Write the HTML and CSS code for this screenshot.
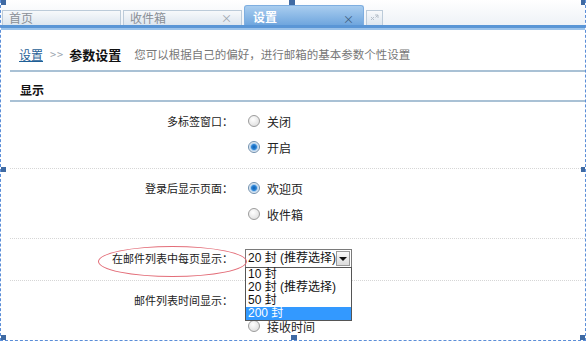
FILE: index.html
```html
<!DOCTYPE html>
<html lang="zh-CN">
<head>
    <meta charset="UTF-8">
    <title>参数设置</title>
    <link rel="stylesheet" href="styles.css">
</head>
<body>
    <div class="frame">
        <div class="tabbar">
            <div class="tab">首页</div>
            <div class="tab">收件箱<span class="tab-close">×</span></div>
            <div class="tab active">设置<span class="tab-close">×</span></div>
            <div class="tab tab-mini">
                <svg width="9" height="9" viewBox="0 0 9 9">
                    <path d="M1 3 L4 6 M4 3 L1 6" stroke="#b5bfc9" stroke-width="1" fill="none"/>
                    <path d="M5 1 H8 V4 M8 1 L5.5 3.5" stroke="#b5bfc9" stroke-width="1" fill="none"/>
                </svg>
            </div>
        </div>

        <div class="page">
            <div class="crumbs">
                <a href="#" class="crumb-link">设置</a>
                <span class="crumb-sep">&gt;&gt;</span>
                <strong class="crumb-title">参数设置</strong>
                <span class="crumb-desc">您可以根据自己的偏好，进行邮箱的基本参数个性设置</span>
            </div>

            <div class="section-title">显示</div>

            <div class="row">
                <div class="row-label">多标签窗口：</div>
                <div class="row-options">
                    <div class="opt"><span class="radio"></span>关闭</div>
                    <div class="opt"><span class="radio checked"></span>开启</div>
                </div>
            </div>

            <div class="row row-tall">
                <div class="row-label">登录后显示页面：</div>
                <div class="row-options">
                    <div class="opt"><span class="radio checked"></span>欢迎页</div>
                    <div class="opt"><span class="radio"></span>收件箱</div>
                </div>
            </div>

            <div class="row row-mid">
                <div class="row-label">在邮件列表中每页显示：</div>
                <div class="row-options">
                    <div class="opt select-opt">
                        <div class="select">
                            <span class="select-value">20 封 (推荐选择)</span>
                            <span class="select-btn"></span>
                            <ul class="select-list">
                                <li>10 封</li>
                                <li>20 封 (推荐选择)</li>
                                <li>50 封</li>
                                <li class="hover">200 封</li>
                            </ul>
                        </div>
                    </div>
                </div>
            </div>

            <div class="row row-last">
                <div class="row-label">邮件列表时间显示：</div>
                <div class="row-options">
                    <!-- first choice sits under the open list -->
                    <div class="opt"></div>
                    <div class="opt"><span class="radio"></span>接收时间</div>
                </div>
            </div>
        </div>

        <!-- red mark drawn around the label -->
        <div class="mark"></div>

        <!-- selection handles -->
        <span class="handle h-tl"></span>
        <span class="handle h-tm"></span>
        <span class="handle h-tr"></span>
        <span class="handle h-ml"></span>
        <span class="handle h-mr"></span>
        <span class="handle h-bl"></span>
        <span class="handle h-bm"></span>
        <span class="handle h-br"></span>
    </div>
</body>
</html>
```

FILE: styles.css
```css
body {
    margin: 0;
    background: #fff;
    font-family: "Noto Sans CJK SC", "Liberation Sans", sans-serif;
    color: #333;
}
.frame {
    position: relative;
    width: 584px;
    height: 340px;
    border: 1px dashed #5b8ed8;
    border-top: none;
    overflow: hidden;
}
.tabbar {
    display: flex;
    align-items: flex-end;
    height: 25px;
    padding-left: 1px;
    background: linear-gradient(#ffffff, #eef2f7);
    border-bottom: 5px solid #5a96d6;
    position: relative;
}
.tabbar::after {
    content: "";
    position: absolute;
    left: 0;
    right: 0;
    bottom: -5px;
    height: 2px;
    background: #9cc3ea;
}
.tab {
    position: relative;
    box-sizing: border-box;
    width: 119px;
    height: 15px;
    margin-right: 2px;
    padding-left: 6px;
    border: 1px solid #bccbd9;
    border-bottom: none;
    background: linear-gradient(#f7f9fb, #dde6ef);
    color: #8a8f96;
    font-size: 12px;
    line-height: 14px;
}
.tab.active {
    width: 120px;
    height: 20px;
    padding-left: 8px;
    border-color: #7eaee0;
    border-radius: 3px 3px 0 0;
    background: linear-gradient(#a9cdef, #6fa6de);
    color: #fff;
    font-weight: bold;
    line-height: 22px;
}
.tab-close {
    position: absolute;
    right: 9px;
    top: 0;
    font-size: 11px;
    color: #9aa3ad;
    font-weight: normal;
}
.tab.active .tab-close {
    color: #3f5f80;
    top: 2px;
}
.tab.tab-mini {
    width: 17px;
    padding: 0;
    display: flex;
    align-items: center;
    justify-content: center;
}
.page {
    margin-left: 9px;
}
.crumbs {
    display: flex;
    align-items: center;
    height: 42px;
    padding-left: 9px;
    padding-top: 8px;
    box-sizing: border-box;
    border-bottom: 2px solid #a9c1d5;
    font-size: 12px;
}
.crumb-link {
    color: #1f5f96;
    text-decoration: underline;
}
.crumb-sep {
    margin: 0 5px 0 7px;
    color: #9aa4ae;
    font-size: 11px;
    letter-spacing: 1px;
}
.crumb-title {
    color: #111;
    font-size: 13px;
    margin-right: 13px;
}
.crumb-desc {
    color: #777;
    font-size: 11.5px;
}
.section-title {
    height: 30px;
    padding-left: 10px;
    padding-top: 10px;
    box-sizing: border-box;
    line-height: 16px;
    border-bottom: 2px solid #a9c1d5;
    font-size: 12px;
    font-weight: bold;
    color: #111;
}
.row {
    display: flex;
    padding: 6px 0 8px;
    border-bottom: 1px dotted #d6d6d6;
    font-size: 11px;
}
.row-tall {
    padding-bottom: 11px;
}
.row-mid {
    padding-bottom: 9px;
}
.row-last {
    border-bottom: none;
}
.row-label {
    width: 223px;
    text-align: right;
    line-height: 26px;
    color: #222;
}
.row-options {
    margin-left: 15px;
    display: flex;
    flex-direction: column;
}
.opt {
    display: flex;
    align-items: center;
    height: 26px;
    font-size: 12px;
    color: #222;
}
.radio {
    box-sizing: border-box;
    width: 12px;
    height: 12px;
    margin-right: 7px;
    border-radius: 50%;
    border: 1px solid #9c9c9c;
    background: radial-gradient(circle at 40% 35%, #fff 0, #e4e4e4 70%, #cfcfcf 100%);
}
.radio.checked {
    border-color: #6f8fae;
    background: radial-gradient(circle, #0b5fb4 0, #2f86d6 2.5px, #a9cdef 3.5px, #f3f3f3 5px);
}
.select-opt {
    margin-left: -3px;
}
.select {
    position: relative;
    box-sizing: border-box;
    width: 107px;
    height: 19px;
    border: 1px solid #7a7a7a;
    font-family: "Liberation Sans", "Noto Sans CJK SC", sans-serif;
    font-size: 12px;
    line-height: 17px;
    background: #fff;
}
.select-value {
    padding-left: 2px;
    color: #111;
}
.select-btn {
    position: absolute;
    right: 1px;
    top: 1px;
    width: 14px;
    height: 15px;
    box-sizing: border-box;
    border: 1px solid #9a9a9a;
    background: linear-gradient(#fafafa, #dcdcdc);
}
.select-btn::after {
    content: "";
    position: absolute;
    left: 2px;
    top: 5px;
    border-left: 4px solid transparent;
    border-right: 4px solid transparent;
    border-top: 4px solid #111;
}
.select-list {
    position: absolute;
    left: -1px;
    top: 17px;
    width: 105px;
    margin: 0;
    padding: 0;
    list-style: none;
    border: 1px solid #555;
    background: #fff;
}
.select-list li {
    height: 13px;
    line-height: 13px;
    padding-left: 2px;
    color: #111;
}
.select-list li.hover {
    background: #3399ff;
    color: #fff;
}
.mark {
    position: absolute;
    left: 97px;
    top: 246px;
    width: 147px;
    height: 29px;
    border: 1px solid #e36d78;
    border-radius: 50%;
}
.handle {
    position: absolute;
    width: 6px;
    height: 5px;
    background: #3f6aa3;
}
.h-tl { left: -1px; top: 0; }
.h-tm { left: 288px; top: 0; }
.h-tr { left: 580px; top: 0; }
.h-ml { left: -1px; top: 167px; }
.h-mr { left: 580px; top: 167px; }
.h-bl { left: -1px; top: 335px; }
.h-bm { left: 290px; top: 335px; }
.h-br { left: 579px; top: 335px; }
```
